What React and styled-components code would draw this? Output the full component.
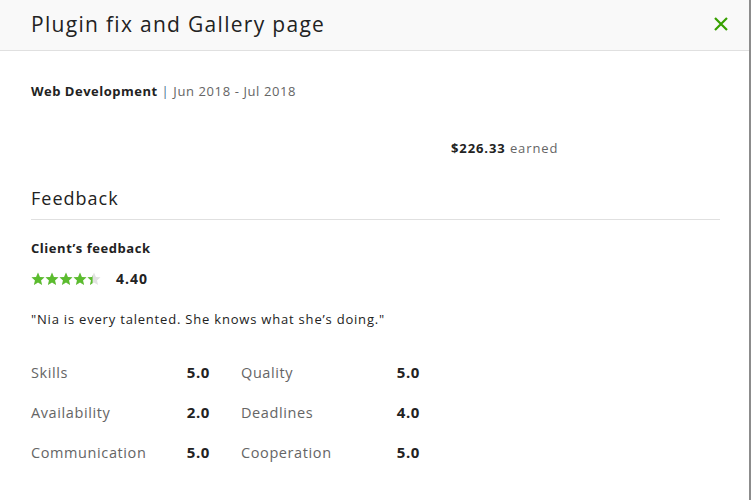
import React from 'react';
import styled, { createGlobalStyle } from 'styled-components';

const GlobalStyle = createGlobalStyle`
    html, body {
        margin: 0;
        padding: 0;
        background: #ffffff;
    }
    body {
        font-family: "Open Sans", "Liberation Sans", sans-serif;
        color: #222222;
    }
`

const ratings = [
    ['Skills', '5.0', 'Quality', '5.0'],
    ['Availability', '2.0', 'Deadlines', '4.0'],
    ['Communication', '5.0', 'Cooperation', '5.0'],
];

const STAR = 'M7 0.6l1.9 4.3 4.6 0.4-3.5 3.1 1.1 4.6L7 10.5 2.9 13l1.1-4.6L0.5 5.3l4.6-0.4z';

class Stars extends React.Component {
    renderStar(i) {
        let fill = Math.max(0, Math.min(1, this.props.score - i));
        let id = 'star-clip-' + i;
        return (
            <svg key={i} width="14" height="14" viewBox="0 0 14 14">
                <defs>
                    <clipPath id={id}>
                        <rect x="0" y="0" width={14 * fill} height="14" />
                    </clipPath>
                </defs>
                <path d={STAR} fill="#e2e2e2" />
                <path d={STAR} fill="#5bbc2e" clipPath={'url(#' + id + ')'} />
            </svg>
        );
    }

    render() {
        return (
            <StarRow>
                {[0, 1, 2, 3, 4].map((i) => this.renderStar(i))}
            </StarRow>
        );
    }
}

class App extends React.Component {
    renderRating(label, value) {
        return (
            <RatingCell key={label}>
                <RatingLabel>{label}</RatingLabel>
                <RatingValue>{value}</RatingValue>
            </RatingCell>
        );
    }

    render() {
        return (
            <>
                <GlobalStyle />
                <Modal>
                    <Header>
                        <Title>Plugin fix and Gallery page</Title>
                        <CloseButton aria-label="Close">
                            <svg width="16" height="16" viewBox="0 0 16 16">
                                <path d="M2 2L14 14M14 2L2 14" stroke="#37a000" strokeWidth="2.2" />
                            </svg>
                        </CloseButton>
                    </Header>
                    <Body>
                        <Meta>
                            <strong>Web Development</strong> <Pipe>|</Pipe> Jun 2018 - Jul 2018
                        </Meta>
                        <Earned>
                            <strong>$226.33</strong> earned
                        </Earned>
                        <SectionTitle>Feedback</SectionTitle>
                        <ClientTitle>Client’s feedback</ClientTitle>
                        <ScoreRow>
                            <Stars score={4.4} />
                            <Score>4.40</Score>
                        </ScoreRow>
                        <Quote>"Nia is every talented. She knows what she’s doing."</Quote>
                        <RatingGrid>
                            {ratings.map((r) => [
                                this.renderRating(r[0], r[1]),
                                this.renderRating(r[2], r[3]),
                            ])}
                        </RatingGrid>
                    </Body>
                </Modal>
            </>
        );
    }
}

const Modal = styled.div`
    width: 751px;
    height: 500px;
    box-sizing: border-box;
    border-right: 2px solid #8c8c8c;
    background: #ffffff;
    overflow: hidden;
`
const Header = styled.div`
    display: flex;
    align-items: center;
    justify-content: space-between;
    height: 51px;
    box-sizing: border-box;
    padding: 0 20px 2px 31px;
    background: #f9f9f9;
    border-bottom: 1px solid #e0e0e0;
`
const Title = styled.h1`
    margin: 0;
    font-size: 21px;
    font-weight: 400;
    color: #222222;
    letter-spacing: 1.3px;
`
const CloseButton = styled.button`
    display: flex;
    align-items: center;
    justify-content: center;
    border: none;
    background: none;
    padding: 0;
    cursor: pointer;
`
const Body = styled.div`
    display: flex;
    flex-direction: column;
    padding: 31px 31px 0 31px;
`
const Meta = styled.div`
    font-size: 13px;
    line-height: 18px;
    color: #656565;
    letter-spacing: 0.6px;
    strong {
        color: #222222;
        font-weight: 700;
        letter-spacing: 0.5px;
    }
`
const Pipe = styled.span`
    color: #4a6f8f;
`
const Earned = styled.div`
    margin: 39px 0 0 420px;
    font-size: 13px;
    line-height: 18px;
    color: #656565;
    letter-spacing: 0.9px;
    strong {
        color: #222222;
        font-weight: 700;
    }
`
const SectionTitle = styled.h2`
    margin: 30px 0 0 0;
    padding-bottom: 10px;
    width: 689px;
    font-size: 18px;
    font-weight: 400;
    line-height: 22px;
    color: #222222;
    letter-spacing: 1px;
    border-bottom: 1px solid #e0e0e0;
`
const ClientTitle = styled.h3`
    margin: 19px 0 0 0;
    font-size: 13px;
    font-weight: 700;
    line-height: 18px;
    color: #222222;
    letter-spacing: 0.55px;
`
const ScoreRow = styled.div`
    display: flex;
    align-items: center;
    gap: 15px;
    margin-top: 12px;
`
const StarRow = styled.div`
    display: flex;
    gap: 0;
`
const Score = styled.span`
    font-size: 14px;
    font-weight: 700;
    color: #222222;
    letter-spacing: 1px;
`
const Quote = styled.p`
    margin: 22px 0 0 0;
    font-size: 13px;
    line-height: 18px;
    color: #222222;
    letter-spacing: 0.8px;
`
const RatingGrid = styled.div`
    display: grid;
    grid-template-columns: 179px 179px;
    column-gap: 31px;
    row-gap: 20px;
    margin-top: 34px;
`
const RatingCell = styled.div`
    display: flex;
    justify-content: space-between;
    align-items: center;
    height: 20px;
`
const RatingLabel = styled.span`
    font-size: 14.5px;
    color: #656565;
    letter-spacing: 0.6px;
`
const RatingValue = styled.span`
    font-size: 15px;
    font-weight: 700;
    color: #222222;
    letter-spacing: 0.6px;
`

export default App;
